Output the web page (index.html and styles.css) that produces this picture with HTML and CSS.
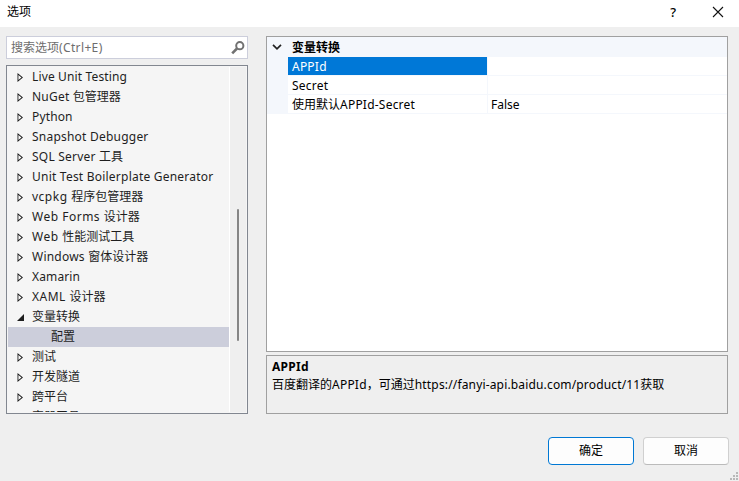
FILE: index.html
```html
<!DOCTYPE html>
<html lang="zh-CN">
<head>
<meta charset="utf-8">
<title>选项</title>
<link rel="stylesheet" href="styles.css">
</head>
<body>
<div class="dialog">
  <header class="titlebar">
    <span class="title">选项</span>
    <span class="help">?</span>
    <svg class="close" width="12" height="12" viewBox="0 0 12 12"><path d="M1 1 11 11M11 1 1 11"/></svg>
  </header>
  <main class="content">
    <section class="sidebar">
      <div class="search">
        <span>搜索选项<span class="lat shortcut">(Ctrl+E)</span></span>
        <svg width="14" height="14" viewBox="0 0 14 14"><circle cx="8.8" cy="4.7" r="3.6"/><path d="M6 7.5 1.2 12.3"/></svg>
      </div>
      <div class="tree">
        <ul class="items">
          <li><i class="arrow"></i><span class="lat tight">Live Unit Testing</span></li>
          <li><i class="arrow"></i><span class="lat">NuGet </span>包管理器</li>
          <li><i class="arrow"></i><span class="lat tight">Python</span></li>
          <li><i class="arrow"></i><span class="lat">Snapshot Debugger</span></li>
          <li><i class="arrow"></i><span class="lat">SQL Server </span>工具</li>
          <li><i class="arrow"></i><span class="lat">Unit Test Boilerplate Generator</span></li>
          <li><i class="arrow"></i><span class="lat wide">vcpkg </span>程序包管理器</li>
          <li><i class="arrow"></i><span class="lat wide">Web Forms </span>设计器</li>
          <li><i class="arrow"></i><span class="lat wide">Web </span>性能测试工具</li>
          <li><i class="arrow"></i><span class="lat">Windows </span>窗体设计器</li>
          <li><i class="arrow"></i><span class="lat tight">Xamarin</span></li>
          <li><i class="arrow"></i><span class="lat wide">XAML </span>设计器</li>
          <li><i class="arrow open"></i>变量转换</li>
          <li class="child selected">配置</li>
          <li><i class="arrow"></i>测试</li>
          <li><i class="arrow"></i>开发隧道</li>
          <li><i class="arrow"></i>跨平台</li>
          <li><i class="arrow"></i>容器工具</li>
        </ul>
        <div class="scrollbar"><div class="thumb"></div></div>
      </div>
    </section>
    <section class="details">
      <div class="grid">
        <div class="category">
          <svg width="10" height="6" viewBox="0 0 10 6"><path d="M1 .8 5 4.8 9 .8"/></svg>
          <b>变量转换</b>
        </div>
        <div class="row active"><span class="name lat">APPId</span><span class="value"></span></div>
        <div class="row"><span class="name lat">Secret</span><span class="value"></span></div>
        <div class="row"><span class="name">使用默认<span class="lat">APPId-Secret</span></span><span class="value">False</span></div>
      </div>
      <div class="description">
        <b>APPId</b>
        <p>百度翻译的<span class="lat">APPId</span>，可通过<span class="url">https://fanyi-api.baidu.com/product/11</span>获取</p>
      </div>
    </section>
  </main>
  <footer class="actions">
    <button class="primary">确定</button>
    <button>取消</button>
  </footer>
  <svg class="grip" width="8" height="8" viewBox="0 0 8 8"><path d="M6 0h2v2H6zM3 3h2v2H3zM6 3h2v2H6zM0 6h2v2H0zM3 6h2v2H3zM6 6h2v2H6z"/></svg>
</div>
</body>
</html>
```
FILE: styles.css
```css
* { box-sizing: border-box; }
body {
  margin: 0;
  font: 12px/20px "Noto Sans", "Noto Sans CJK SC", sans-serif;
  color: #000;
}
.lat { letter-spacing: .22px; }
.tight { letter-spacing: .14px; }
.wide { letter-spacing: .5px; }
.shortcut { letter-spacing: .36px; }
.url { letter-spacing: .16px; }
.dialog {
  position: relative;
  display: flex;
  flex-direction: column;
  width: 739px;
  height: 481px;
  background: #efefef;
  overflow: hidden;
}
.titlebar {
  display: flex;
  align-items: center;
  height: 27px;
  padding: 0 15px 4px 7px;
  background: #fff;
}
.title { flex: 1; }
.help { margin-right: 36px; font-size: 13px; font-weight: 500; }
.close { fill: none; stroke: #111; stroke-width: 1.1; }
.content {
  display: flex;
  gap: 18px;
  height: 387px;
  padding: 9px 12px 0 6px;
}
.sidebar {
  display: flex;
  flex-direction: column;
  gap: 6px;
  width: 242px;
}
.search {
  display: flex;
  align-items: center;
  justify-content: space-between;
  height: 23px;
  padding: 0 2px 0 4px;
  border: 1px solid #cccedb;
  background: #fff;
  color: #6d6d6d;
}
.search svg { fill: none; stroke: #717171; stroke-width: 2; }
.search path { stroke-width: 2.6; }
.tree {
  display: flex;
  height: 349px;
  padding: 1px;
  border: 1px solid #828790;
  background: #f5f5f5;
  overflow: hidden;
}
.items {
  flex: 1;
  margin: 0;
  padding: 0;
  list-style: none;
  color: #1e1e1e;
  overflow: hidden;
}
.items li {
  display: flex;
  height: 20px;
  padding-left: 9px;
  white-space: pre;
}
.items .child { padding-left: 43px; }
.items .selected { background: #cccedb; }
.arrow {
  width: 6px;
  height: 9px;
  margin: 6px 9px 0 0;
  background: #1e1e1e;
  clip-path: polygon(evenodd, .5px 0, 6px 4.5px, .5px 9px, .5px 0, 1.4px 2px, 1.4px 7px, 4.5px 4.5px, 1.4px 2px);
}
.arrow.open {
  width: 7px;
  height: 7px;
  margin: 7px 8px 0 0;
  clip-path: polygon(100% 0, 100% 100%, 0 100%);
}
.scrollbar {
  width: 17px;
  padding: 142px 0 0 7px;
  border-left: 1px solid #fff;
  background: #efefef;
}
.thumb { width: 2px; height: 132px; background: #858585; border-radius: 1px; }
.details {
  display: flex;
  flex-direction: column;
  gap: 3px;
  width: 462px;
  margin-right: -3px;
}
.grid {
  height: 316px;
  border: 1px solid #a0a0a0;
  background: #fff;
}
.category {
  display: flex;
  align-items: center;
  height: 20px;
  padding-left: 5px;
  background: #f4f7fc;
}
.category b { padding-top: 2px; }
.category svg { margin-right: 10px; fill: none; stroke: #222; stroke-width: 1.7; }
.row {
  display: flex;
  height: 19px;
  border-left: 21px solid #f4f7fc;
  line-height: 19px;
}
.name, .value { padding-left: 4px; border-bottom: 1px solid #f4f7fc; }
.name { width: 200px; border-right: 1px solid #f4f7fc; }
.value { flex: 1; padding-left: 3px; }
.active .name { background: #0078d7; background-clip: padding-box; color: #fff; }
.description {
  height: 59px;
  padding: 2px 5px;
  border: 1px solid #a0a0a0;
  line-height: 18px;
}
.description b { display: block; letter-spacing: .3px; }
.description p { margin: 0; white-space: nowrap; }
.actions {
  display: flex;
  justify-content: flex-end;
  gap: 9px;
  padding: 23px 10px 0 0;
}
button {
  width: 86px;
  height: 28px;
  padding: 0;
  border: 1px solid #d0d0d0;
  border-bottom-color: #bbb;
  border-radius: 4px;
  background: #fdfdfd;
  font: inherit;
  color: #000;
}
.primary { border-color: #0078d4; }
.grip { position: absolute; right: 1px; bottom: 1px; fill: #b8b8b8; }
```
